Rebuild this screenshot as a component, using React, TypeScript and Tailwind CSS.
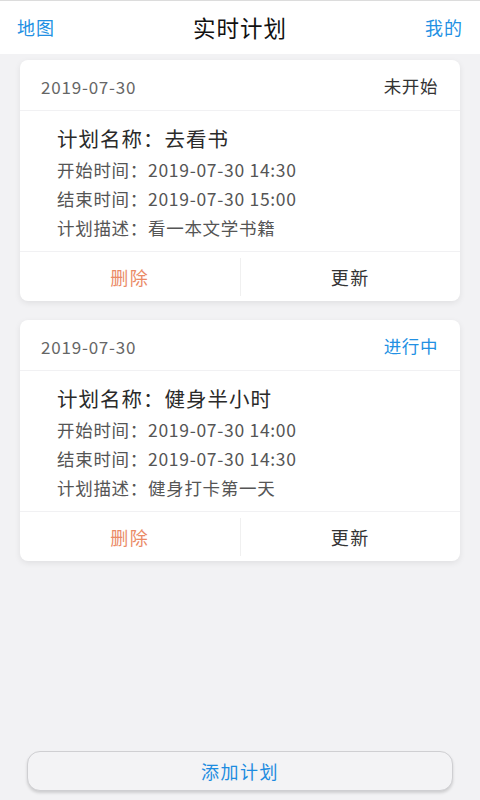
import React from "react";

type Plan = { date: string; status: string; statusBlue: boolean; name: string; start: string; end: string; desc: string };

const plans: Plan[] = [
  { date: "2019-07-30", status: "未开始", statusBlue: false, name: "去看书", start: "2019-07-30 14:30", end: "2019-07-30 15:00", desc: "看一本文学书籍" },
  { date: "2019-07-30", status: "进行中", statusBlue: true, name: "健身半小时", start: "2019-07-30 14:00", end: "2019-07-30 14:30", desc: "健身打卡第一天" },
];

function Card({ p }: { p: Plan }) {
  return (
    <div className="bg-white rounded-[8px] shadow-[0_2px_6px_rgba(0,0,0,0.08)] flex flex-col">
      <div className="h-[51px] flex items-center justify-between pl-[21px] pr-[22px] pt-[3px] border-b border-[#f1f1f3]">
        <span className="text-[17px] text-[#666] tracking-[0.8px]">{p.date}</span>
        <span className={"text-[17.5px] tracking-[0.6px] " + (p.statusBlue ? "text-[#2290e3]" : "text-[#333]")}>{p.status}</span>
      </div>
      <div className="flex flex-col pl-[37px] pt-[12px] pb-[9px]">
        <div className="h-[32px] leading-[30px] text-[20.5px] text-[#2a2a2a] tracking-[1px]">计划名称：{p.name}</div>
        <div className="h-[29px] leading-[29px] text-[17.5px] text-[#555] tracking-[0.7px]">开始时间：{p.start}</div>
        <div className="h-[29px] leading-[29px] text-[17.5px] text-[#555] tracking-[0.7px]">结束时间：{p.end}</div>
        <div className="h-[29px] leading-[29px] text-[17.5px] text-[#555] tracking-[0.7px]">计划描述：{p.desc}</div>
      </div>
      <div className="h-[50px] flex items-center border-t border-[#f1f1f3]">
        <div className="flex-1 flex items-center justify-center text-[18px] tracking-[1.5px] text-[#ea8a66] pt-[2px]">删除</div>
        <div className="w-px h-[38px] bg-[#f0f0f0]" />
        <div className="flex-1 flex items-center justify-center text-[18px] tracking-[1.5px] text-[#333] pt-[2px]">更新</div>
      </div>
    </div>
  );
}

export default function App() {
  return (
    <div
      className="w-[480px] h-[800px] bg-[#f2f2f4] flex flex-col overflow-hidden"
      style={{ fontFamily: '"Noto Sans CJK SC", "Noto Sans", sans-serif' }}
    >
      <div className="h-[54px] bg-white border-t border-[#dcdcdc] flex items-center justify-between px-[17px]">
        <span className="text-[18px] tracking-[1px] text-[#2290e3]">地图</span>
        <span className="text-[22.5px] text-[#111] tracking-[1px]">实时计划</span>
        <span className="text-[18px] tracking-[1px] text-[#2290e3]">我的</span>
      </div>
      <div className="flex flex-col gap-[19px] px-[20px] pt-[6px]">
        {plans.map((p, i) => (
          <Card key={i} p={p} />
        ))}
      </div>
      <div className="flex-1" />
      <div className="px-[27px] pb-[9px]">
        <div className="h-[40px] rounded-[13px] border border-[#cfcfd2] bg-[#f3f3f5] shadow-[0_2px_3px_rgba(0,0,0,0.15)] flex items-center justify-center text-[18px] tracking-[1.5px] text-[#1d8ce0]">
          添加计划
        </div>
      </div>
    </div>
  );
}
